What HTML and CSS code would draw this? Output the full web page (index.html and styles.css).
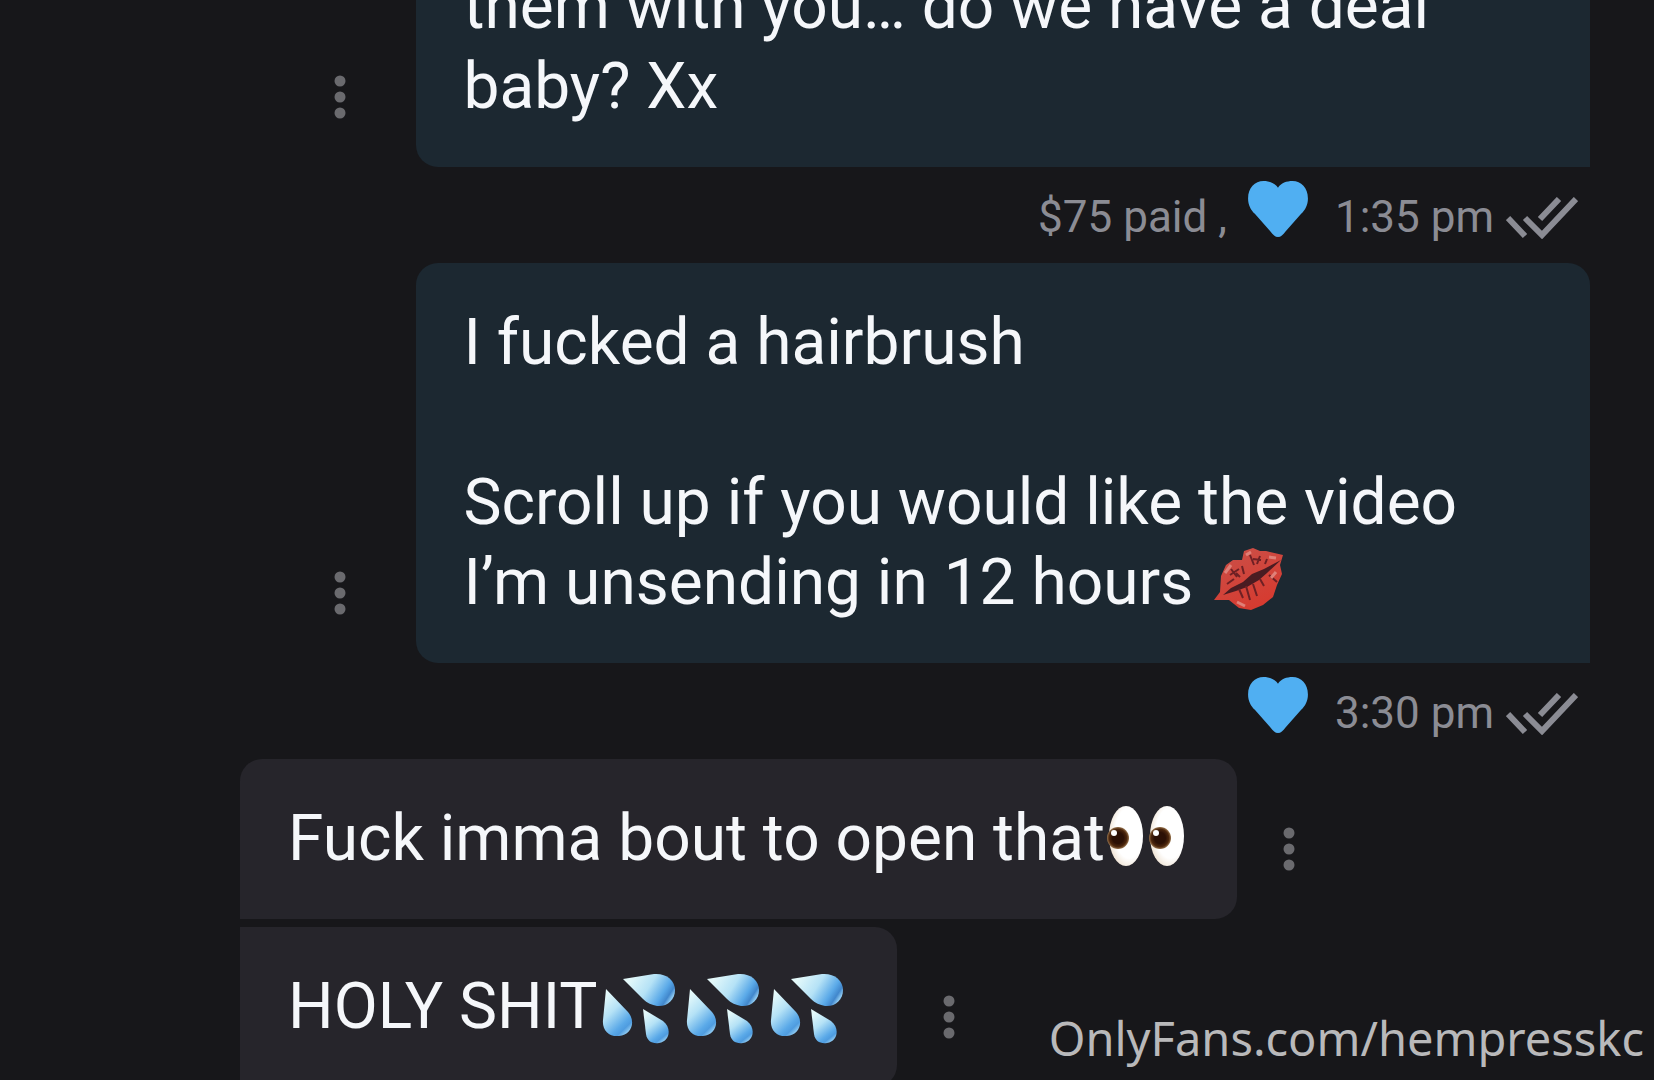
FILE: index.html
```html
<!DOCTYPE html>
<html lang="en">

  <head>
    <meta charset="utf-8">
    <meta name="viewport" content="width=device-width">
    <link rel="stylesheet" href="styles.css">
    <title>Messages</title>
  </head>

  <body>
    <!-- shapes used more than once -->
    <svg class="shapes" aria-hidden="true">
      <defs>
        <linearGradient id="water" x1="0.1" y1="0" x2="0.7" y2="1">
          <stop offset="0.1" stop-color="#e4f9fa"/>
          <stop offset="0.45" stop-color="#b5e2f6"/>
          <stop offset="0.8" stop-color="#5aa9e8"/>
          <stop offset="0.9" stop-color="#4f9cdf"/>
          <stop offset="1" stop-color="#8cc8f0"/>
        </linearGradient>
        <linearGradient id="water-side" x1="0" y1="0.2" x2="1" y2="0.6">
          <stop offset="0.1" stop-color="#e4f9fa"/>
          <stop offset="0.5" stop-color="#b5e2f6"/>
          <stop offset="0.8" stop-color="#5aa9e8"/>
          <stop offset="0.92" stop-color="#4187cc"/>
          <stop offset="1" stop-color="#8cc8f0"/>
        </linearGradient>
        <radialGradient id="eyeball" cx="0.6" cy="0.45" r="0.6">
          <stop offset="0.7" stop-color="#ffffff"/>
          <stop offset="1" stop-color="#f1e6d8"/>
        </radialGradient>
        <radialGradient id="iris">
          <stop offset="0.5" stop-color="#2b1005"/>
          <stop offset="0.8" stop-color="#4d270d"/>
          <stop offset="1" stop-color="#94704a"/>
        </radialGradient>
        <linearGradient id="lipstick" x1="0" y1="0" x2="0.5" y2="1">
          <stop offset="0" stop-color="#c9514a"/>
          <stop offset="1" stop-color="#d63b30"/>
        </linearGradient>
      </defs>
      <symbol id="dots" viewBox="0 0 12 44">
        <circle cx="6" cy="6" r="5.5"/>
        <circle cx="6" cy="22" r="5.5"/>
        <circle cx="6" cy="38" r="5.5"/>
      </symbol>
      <symbol id="heart" viewBox="0 0 62 58">
        <path d="M31 58C28 58 26 56 23 52L7 34C3 30 0 25 0 18C0 7 7 0 16 0C22 0 28 2 31 7C34 2 40 0 46 0C55 0 62 7 62 18C62 25 59 30 55 34L39 52C36 56 34 58 31 58Z"/>
      </symbol>
      <symbol id="read" viewBox="0 0 72 42">
        <path d="M2 21L19 39M19 21L36 38L70 2M34 22L53 2"/>
      </symbol>
      <symbol id="drops" viewBox="0 0 84 78">
        <path fill="url(#water-side)" d="M26 13L57 8C69 7 78 14 78 24C78 34 70 41 60 40C55 39 50 37 46 33Z"/>
        <path fill="url(#water)" d="M9 23L31 46C39 55 35 69 22 70C12 71 5 64 6 54Z"/>
        <path fill="url(#water)" d="M46 43L66 55C75 62 73 75 62 77C55 78 50 75 49 68Z"/>
      </symbol>
    </svg>

    <main class="chat">
      <article class="message sent">
        <button class="more" aria-label="More"><svg><use href="#dots"/></svg></button>
        <p class="bubble">them with you… do we have a deal<br>
        baby? Xx</p>
        <footer class="meta">
          <span>$75 paid ,</span>
          <svg class="heart"><use href="#heart"/></svg>
          <time>1:35 pm</time>
          <svg class="read"><use href="#read"/></svg>
        </footer>
      </article>

      <article class="message sent">
        <button class="more" aria-label="More"><svg><use href="#dots"/></svg></button>
        <p class="bubble">I fucked a hairbrush<br>
        <br>
        Scroll up if you would like the video<br>
        I’m unsending in 12 hours
        <svg class="emoji" viewBox="0 0 84 78">
          <path fill="url(#lipstick)" d="M5 58L11 50L12 34L17 23L24 18L33 18L35 9L44 6L51 9L57 9L74 13L71 23L73 32L68 43L64 55L54 63L42 68L30 66L20 58Z"/>
          <path fill="#4a1c22" d="M14 53L22 46L34 40L43 32L55 27L72 18L58 31L50 38L38 45L27 49Z"/>
          <path class="crease" d="M30 47L34 56M37 44L41 58M44 42L48 54M51 37L55 44M21 33L30 27M18 42L25 37M41 13L45 23M51 14L48 22M58 17L56 22M33 24L35 32M60 33L68 40M27 31L31 35M22 27L28 35M44 17L52 18"/>
          <path class="shine" d="M16 31L22 23M37 13L42 10M60 15L67 16M62 36L67 30M28 60L36 64"/>
        </svg></p>
        <footer class="meta">
          <svg class="heart"><use href="#heart"/></svg>
          <time>3:30 pm</time>
          <svg class="read"><use href="#read"/></svg>
        </footer>
      </article>

      <article class="message received first">
        <p class="bubble">Fuck imma bout to open that<svg class="emoji" viewBox="0 0 84 78">
          <ellipse fill="url(#eyeball)" cx="21" cy="38" rx="17" ry="30"/>
          <ellipse fill="url(#eyeball)" cx="62" cy="38" rx="17" ry="30"/>
          <circle fill="url(#iris)" cx="13" cy="40" r="11"/>
          <circle fill="url(#iris)" cx="55" cy="40" r="11"/>
          <circle fill="#fff" cx="9" cy="35" r="3"/>
          <circle fill="#fff" cx="51" cy="35" r="3"/>
        </svg></p>
        <button class="more" aria-label="More"><svg><use href="#dots"/></svg></button>
      </article>

      <article class="message received">
        <p class="bubble">HOLY SHIT<svg class="emoji"><use href="#drops"/></svg><svg class="emoji"><use href="#drops"/></svg><svg class="emoji"><use href="#drops"/></svg></p>
        <button class="more" aria-label="More"><svg><use href="#dots"/></svg></button>
      </article>
    </main>

    <div class="watermark">OnlyFans.com/hempresskc</div>
  </body>
</html>
```
FILE: styles.css
```css
body {
  margin: 0;
  height: 100vh;
  overflow: hidden;
  background-color: #17171a;
  font-family: Roboto, sans-serif;
  color: #f5f7fa;
}

.shapes {
  position: absolute;
  width: 0;
  height: 0;
}

/* scrolled down, so the first message is cut by the top edge */
.chat {
  margin-top: -73px;
  padding: 0 64px 0 240px;
}

.message {
  display: flex;
  flex-wrap: wrap;
  align-items: flex-end;
}

.sent {
  justify-content: flex-end;
}

.received {
  margin-bottom: 8px;
}

.bubble {
  margin: 0;
  padding: 40px 48px;
  font-size: 64px;
  line-height: 80px;
}

.sent .bubble {
  box-sizing: border-box;
  width: 87%;
  border-radius: 22px 22px 0 22px;
  background-color: #1c2831;
}

.received .bubble {
  border-radius: 0 22px 22px 0;
  background-color: #26252b;
}

.received.first .bubble {
  border-top-left-radius: 22px;
}

.more {
  display: flex;
  justify-content: center;
  width: 48px;
  margin: 0 28px 48px;
  padding: 0;
  border: 0;
  background: none;
  color: #6a6a6e;
}

.sent .more {
  margin-right: 52px;
  margin-left: 0;
}

.more svg {
  width: 12px;
  height: 44px;
  fill: currentColor;
}

.meta {
  display: flex;
  justify-content: flex-end;
  box-sizing: border-box;
  width: 100%;
  height: 96px;
  padding: 14px 12px 0 0;
  font-size: 44px;
  line-height: 72px;
  color: #8b8c94;
}

.heart {
  width: 60px;
  height: 56px;
  margin: 0 27px 0 21px;
  fill: #50aff2;
}

.read {
  width: 72px;
  height: 42px;
  margin: 16px 0 0 12px;
  fill: none;
  stroke: #8b8c94;
  stroke-width: 6px;
}

/* the negative margin keeps the emoji from making its line taller */
.emoji {
  width: 84px;
  height: 78px;
  margin-top: -4px;
  vertical-align: -16px;
}

.crease {
  fill: none;
  stroke: #6e2024;
  stroke-width: 2px;
}

.shine {
  fill: none;
  stroke: #df8078;
  stroke-width: 3px;
}

.watermark {
  position: absolute;
  right: 10px;
  bottom: 10px;
  font-family: "Noto Sans", sans-serif;
  font-size: 47px;
  line-height: 64px;
  color: #b9b9ba;
}
```
